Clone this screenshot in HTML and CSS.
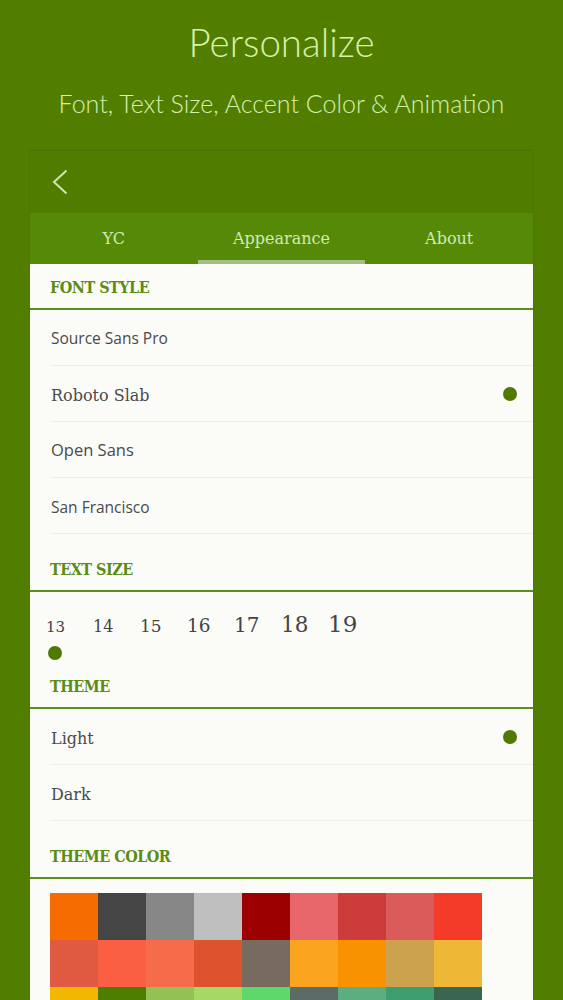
FILE: index.html
```html
<!DOCTYPE html>
<html lang="en">
<head>
<meta charset="utf-8">
<title>Personalize</title>
<link rel="stylesheet" href="styles.css">
</head>
<body>
<header class="hero">
  <h1 class="hero-title">Personalize</h1>
  <p class="hero-sub">Font, Text Size, Accent Color &amp; Animation</p>
</header>
<main class="card">
  <div class="card-bar">
    <svg class="back" width="16" height="26" viewBox="0 0 16 26" aria-hidden="true"><path d="M14.5 1.5 L2 13 L14.5 24.5" fill="none" stroke="#cfe6b0" stroke-width="2"/></svg>
  </div>
  <nav class="tabs">
    <div class="tab">YC</div>
    <div class="tab active">Appearance</div>
    <div class="tab">About</div>
  </nav>
  <div class="content">
    <h2 class="sec-head first">FONT STYLE</h2>
    <ul class="opts">
      <li class="opt f-source">Source Sans Pro</li>
      <li class="opt f-slab">Roboto Slab<span class="dot"></span></li>
      <li class="opt f-open">Open Sans</li>
      <li class="opt f-sf">San Francisco</li>
    </ul>
    <h2 class="sec-head">TEXT SIZE</h2>
    <div class="sizes">
      <div class="size-nums">
        <span class="num s13">13</span>
        <span class="num s14">14</span>
        <span class="num s15">15</span>
        <span class="num s16">16</span>
        <span class="num s17">17</span>
        <span class="num s18">18</span>
        <span class="num s19">19</span>
      </div>
      <div class="size-dots"><span class="dot"></span></div>
    </div>
    <h2 class="sec-head">THEME</h2>
    <ul class="opts">
      <li class="opt f-slab">Light<span class="dot"></span></li>
      <li class="opt f-slab">Dark</li>
    </ul>
    <h2 class="sec-head">THEME COLOR</h2>
    <div class="swatches">
      <span class="sw c1"></span><span class="sw c2"></span><span class="sw c3"></span><span class="sw c4"></span><span class="sw c5"></span><span class="sw c6"></span><span class="sw c7"></span><span class="sw c8"></span><span class="sw c9"></span>
      <span class="sw c10"></span><span class="sw c11"></span><span class="sw c12"></span><span class="sw c13"></span><span class="sw c14"></span><span class="sw c15"></span><span class="sw c16"></span><span class="sw c17"></span><span class="sw c18"></span>
      <span class="sw c19"></span><span class="sw c20"></span><span class="sw c21"></span><span class="sw c22"></span><span class="sw c23"></span><span class="sw c24"></span><span class="sw c25"></span><span class="sw c26"></span><span class="sw c27"></span>
    </div>
  </div>
</main>
</body>
</html>
```
FILE: styles.css
```css
html, body {
  margin: 0;
  padding: 0;
}
body {
  background: #527e00;
  font-family: "Open Sans", sans-serif;
  width: 563px;
  overflow: hidden;
}
.hero {
  text-align: center;
  color: #d6f0ae;
  padding-top: 18px;
}
.hero-title {
  margin: 0;
  font-family: Lato, "Open Sans", sans-serif;
  font-weight: 300;
  font-size: 38.5px;
  line-height: 48px;
}
.hero-sub {
  margin: 20px 0 0;
  font-family: Lato, "Open Sans", sans-serif;
  font-weight: 300;
  font-size: 25px;
  line-height: 34px;
}
.card {
  margin: 31px 30px 0;
  width: 503px;
  box-shadow: 0 -1px 2px rgba(0,0,0,0.12);
}
.card-bar {
  height: 62px;
  background: #507c00;
  display: flex;
  align-items: center;
  padding-left: 22px;
}
.tabs {
  display: flex;
  height: 51px;
  background: #578909;
}
.tab {
  flex: 1;
  display: flex;
  align-items: center;
  justify-content: center;
  color: #d3eab0;
  font-family: "DejaVu Serif", serif;
  font-size: 16px;
  box-sizing: border-box;
}
.tab.active {
  border-bottom: 4px solid #a3bd86;
  padding-top: 4px;
}
.content {
  background: #fbfbf8;
  padding-bottom: 40px;
}
.sec-head {
  margin: 0;
  padding: 26px 20px 10px;
  line-height: 20px;
  font-family: "DejaVu Serif", serif;
  font-weight: bold;
  font-size: 16px;
  font-stretch: condensed;
  letter-spacing: -0.5px;
  color: #5b8c14;
  border-bottom: 2px solid #5d8e1c;
}
.sec-head.first {
  padding-top: 14px;
  padding-bottom: 10px;
}
.opts {
  list-style: none;
  margin: 0;
  padding: 0;
}
.opt {
  margin-left: 21px;
  padding-right: 16px;
  height: 55px;
  border-bottom: 1px solid #ececE8;
  display: flex;
  align-items: center;
  justify-content: space-between;
  color: #4a4a4a;
}
.f-source { font-family: "Open Sans", sans-serif; font-size: 15.5px; }
.f-slab { font-family: "DejaVu Serif", serif; font-size: 16px; height: 52px; padding-top: 3px; }
.f-open { font-family: "Open Sans", sans-serif; font-size: 16.5px; }
.f-sf { font-family: "Open Sans", sans-serif; font-size: 15.5px; height: 53px; padding-top: 2px; }
.f-slab .dot { margin-top: -3px; }
.dot {
  width: 14px;
  height: 14px;
  border-radius: 50%;
  background: #4f7a00;
  display: block;
}
.sizes {
  padding: 19px 0 0 16px;
}
.size-nums {
  display: flex;
  align-items: baseline;
  line-height: 26px;
}
.num {
  width: 47px;
  font-family: "DejaVu Serif", serif;
  color: #444;
}
.s13 { font-size: 15px; }
.s14 { font-size: 16px; }
.s15 { font-size: 17px; }
.s16 { font-size: 18.5px; }
.s17 { font-size: 20px; }
.s18 { font-size: 21.5px; }
.s19 { font-size: 23px; }
.size-dots {
  margin-top: 6px;
  padding-left: 2px;
  height: 14px;
}
.sizes + .sec-head {
  padding-top: 17px;
}
.swatches {
  display: grid;
  grid-template-columns: repeat(9, 48px);
  grid-auto-rows: 47px;
  margin: 14px 0 0 20px;
}
.c1 { background: #f76c00; }
.c2 { background: #454545; }
.c3 { background: #878787; }
.c4 { background: #bfbfbf; }
.c5 { background: #9c0000; }
.c6 { background: #e8676a; }
.c7 { background: #cc3c3b; }
.c8 { background: #db5a5a; }
.c9 { background: #f43b2a; }
.c10 { background: #e05a41; }
.c11 { background: #fb5f43; }
.c12 { background: #f66b4a; }
.c13 { background: #dc532e; }
.c14 { background: #776b60; }
.c15 { background: #faa420; }
.c16 { background: #f99200; }
.c17 { background: #cda24f; }
.c18 { background: #eeb836; }
.c19 { background: #f2b700; }
.c20 { background: #4e7e00; }
.c21 { background: #94c154; }
.c22 { background: #a6d866; }
.c23 { background: #5ed86a; }
.c24 { background: #5c6b67; }
.c25 { background: #5aae80; }
.c26 { background: #3f9e70; }
.c27 { background: #3a6551; }
```
